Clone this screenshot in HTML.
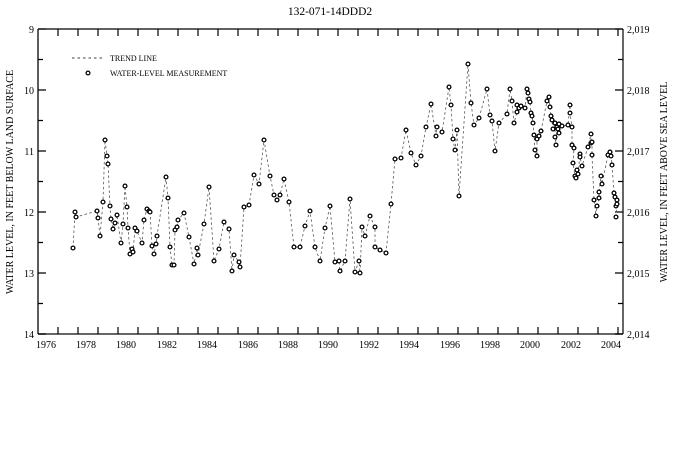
<!DOCTYPE html>
<html><head><meta charset="utf-8"><style>
html,body{margin:0;padding:0;background:#fff;}
svg{display:block;font-family:"Liberation Serif",serif;}
#pts circle{r:1.9px;}
</style></head><body>
<svg width="673" height="456" viewBox="0 0 673 456" xmlns="http://www.w3.org/2000/svg">
<text x="330" y="15" font-size="11.5" text-anchor="middle">132-071-14DDD2</text>
<g stroke="#000" fill="none">
<line x1="38" y1="29" x2="623" y2="29" stroke-width="1.2"/>
<line x1="38" y1="29" x2="38" y2="334" stroke-width="1.6" stroke="#333"/>
<line x1="38" y1="334" x2="623" y2="334" stroke-width="1.6" stroke="#333"/>
<line x1="623" y1="29" x2="623" y2="334" stroke-width="1.2"/>
<g stroke-width="1.2">
<path d="M38 29h8M38 90h8M38 151h8M38 212h8M38 273h8M38 334h8M38 59.5h5M38 120.5h5M38 181.5h5M38 242.5h5M38 303.5h5"/>
<path d="M623 29h-8M623 90h-8M623 151h-8M623 212h-8M623 273h-8M623 334h-8M623 59.5h-5M623 120.5h-5M623 181.5h-5M623 242.5h-5M623 303.5h-5"/>
<path d="M58 29v7M78 29v7M98 29v7M118 29v7M138 29v7M158 29v7M178 29v7M198 29v7M218 29v7M238 29v7M258 29v7M278 29v7M298 29v7M318 29v7M338 29v7M358 29v7M378 29v7M398 29v7M418 29v7M438 29v7M458 29v7M478 29v7M498 29v7M518 29v7M538 29v7M558 29v7M578 29v7M598 29v7M618 29v7"/>
<path d="M58 334v-7M78 334v-7M98 334v-7M118 334v-7M138 334v-7M158 334v-7M178 334v-7M198 334v-7M218 334v-7M238 334v-7M258 334v-7M278 334v-7M298 334v-7M318 334v-7M338 334v-7M358 334v-7M378 334v-7M398 334v-7M418 334v-7M438 334v-7M458 334v-7M478 334v-7M498 334v-7M518 334v-7M538 334v-7M558 334v-7M578 334v-7M598 334v-7M618 334v-7"/>
</g>
</g>
<g font-size="10">
<g text-anchor="end"><text x="34" y="33">9</text><text x="34" y="94">10</text><text x="34" y="155">11</text><text x="34" y="216">12</text><text x="34" y="277">13</text><text x="34" y="338">14</text></g>
<g><text x="627" y="33">2,019</text><text x="627" y="94">2,018</text><text x="627" y="155">2,017</text><text x="627" y="216">2,016</text><text x="627" y="277">2,015</text><text x="627" y="338">2,014</text></g>
<g text-anchor="middle"><text x="46" y="348">1976</text><text x="86" y="348">1978</text><text x="126" y="348">1980</text><text x="167" y="348">1982</text><text x="207" y="348">1984</text><text x="248" y="348">1986</text><text x="288" y="348">1988</text><text x="328" y="348">1990</text><text x="369" y="348">1992</text><text x="409" y="348">1994</text><text x="450" y="348">1996</text><text x="490" y="348">1998</text><text x="530" y="348">2000</text><text x="571" y="348">2002</text><text x="611" y="348">2004</text></g>
<text transform="translate(13,182) rotate(-90)" text-anchor="middle">WATER LEVEL, IN FEET BELOW LAND SURFACE</text>
<text transform="translate(667,182) rotate(-90)" text-anchor="middle">WATER LEVEL, IN FEET ABOVE SEA LEVEL</text>
</g>
<line x1="72" y1="58" x2="105" y2="58" stroke="#000" stroke-width="0.8" stroke-dasharray="2.5,3"/>
<text x="110" y="61" font-size="8">TREND LINE</text>
<circle cx="88" cy="73" r="1.9" fill="none" stroke="#000" stroke-width="1.3"/>
<text x="110" y="76" font-size="8">WATER-LEVEL MEASUREMENT</text>
<polyline fill="none" stroke="#555" stroke-width="0.8" stroke-dasharray="2.5,2.5" points="73,248 75,212 76,217 97,211 98,218 100,236 103,202 105,140 107,156 108,164 110,206 111,219 113,229 115,223 117,215 121,243 123,224 125,186 127,207 128,228 130,254 132,249 133,252 135,228 137,231 142,243 144,220 147,209 149,211 150,212 152,246 154,254 156,244 157,236 166,177 168,198 170,247 172,265 174,265 175,230 177,227 178,220 184,213 189,237 194,264 197,248 198,255 204,224 209,187 214,261 219,249 224,222 229,229 232,271 234,255 239,262 240,267 244,207 249,205 254,175 259,184 264,140 270,176 274,195 277,200 280,195 284,179 289,202 294,247 300,247 305,226 310,211 315,247 320,261 325,228 330,206 335,262 339,261 340,271 345,261 350,199 355,272 359,261 360,273 362,227 365,236 370,216 375,227 375,247 380,250 386,253 391,204 395,159 401,158 406,130 411,153 416,165 421,156 426,127 431,104 436,136 437,127 442,132 449,87 451,105 453,139 455,150 457,130 459,196 468,64 471,103 474,125 479,118 487,89 490,115 492,121 495,151 499,123 507,114 510,89 512,101 514,123 517,112 517,105 519,108 521,106 525,108 527,89 528,93 529,99 530,102 531,113 532,116 533,123 534,135 535,150 537,156 537,139 539,136 541,131 547,101 549,97 550,107 551,116 552,120 553,129 555,123 555,137 556,145 557,127 558,129 559,124 559,133 562,126 568,125 570,105 570,113 572,127 572,145 574,148 573,163 575,176 576,178 577,170 578,174 580,154 580,157 582,166 588,147 591,134 591,143 592,142 592,155 594,200 596,216 597,206 599,198 599,192 601,176 602,184 608,155 610,152 611,156 612,165 614,193 615,197 617,200 616,206 617,204 616,217"/>
<g id="pts" fill="#fff" stroke="#000" stroke-width="1.3">
<circle cx="73" cy="248"/><circle cx="75" cy="212"/><circle cx="76" cy="217"/><circle cx="97" cy="211"/><circle cx="98" cy="218"/><circle cx="100" cy="236"/><circle cx="103" cy="202"/><circle cx="105" cy="140"/><circle cx="107" cy="156"/><circle cx="108" cy="164"/><circle cx="110" cy="206"/><circle cx="111" cy="219"/><circle cx="113" cy="229"/><circle cx="115" cy="223"/><circle cx="117" cy="215"/><circle cx="121" cy="243"/><circle cx="123" cy="224"/><circle cx="125" cy="186"/><circle cx="127" cy="207"/><circle cx="128" cy="228"/><circle cx="130" cy="254"/><circle cx="132" cy="249"/><circle cx="133" cy="252"/><circle cx="135" cy="228"/><circle cx="137" cy="231"/><circle cx="142" cy="243"/><circle cx="144" cy="220"/><circle cx="147" cy="209"/><circle cx="149" cy="211"/><circle cx="150" cy="212"/><circle cx="152" cy="246"/><circle cx="154" cy="254"/><circle cx="156" cy="244"/><circle cx="157" cy="236"/><circle cx="166" cy="177"/><circle cx="168" cy="198"/><circle cx="170" cy="247"/><circle cx="172" cy="265"/><circle cx="174" cy="265"/><circle cx="175" cy="230"/><circle cx="177" cy="227"/><circle cx="178" cy="220"/><circle cx="184" cy="213"/><circle cx="189" cy="237"/><circle cx="194" cy="264"/><circle cx="197" cy="248"/><circle cx="198" cy="255"/><circle cx="204" cy="224"/><circle cx="209" cy="187"/><circle cx="214" cy="261"/><circle cx="219" cy="249"/><circle cx="224" cy="222"/><circle cx="229" cy="229"/><circle cx="232" cy="271"/><circle cx="234" cy="255"/><circle cx="239" cy="262"/><circle cx="240" cy="267"/><circle cx="244" cy="207"/><circle cx="249" cy="205"/><circle cx="254" cy="175"/><circle cx="259" cy="184"/><circle cx="264" cy="140"/><circle cx="270" cy="176"/><circle cx="274" cy="195"/><circle cx="277" cy="200"/><circle cx="280" cy="195"/><circle cx="284" cy="179"/><circle cx="289" cy="202"/><circle cx="294" cy="247"/><circle cx="300" cy="247"/><circle cx="305" cy="226"/><circle cx="310" cy="211"/><circle cx="315" cy="247"/><circle cx="320" cy="261"/><circle cx="325" cy="228"/><circle cx="330" cy="206"/><circle cx="335" cy="262"/><circle cx="339" cy="261"/><circle cx="340" cy="271"/><circle cx="345" cy="261"/><circle cx="350" cy="199"/><circle cx="355" cy="272"/><circle cx="359" cy="261"/><circle cx="360" cy="273"/><circle cx="362" cy="227"/><circle cx="365" cy="236"/><circle cx="370" cy="216"/><circle cx="375" cy="227"/><circle cx="375" cy="247"/><circle cx="380" cy="250"/><circle cx="386" cy="253"/><circle cx="391" cy="204"/><circle cx="395" cy="159"/><circle cx="401" cy="158"/><circle cx="406" cy="130"/><circle cx="411" cy="153"/><circle cx="416" cy="165"/><circle cx="421" cy="156"/><circle cx="426" cy="127"/><circle cx="431" cy="104"/><circle cx="436" cy="136"/><circle cx="437" cy="127"/><circle cx="442" cy="132"/><circle cx="449" cy="87"/><circle cx="451" cy="105"/><circle cx="453" cy="139"/><circle cx="455" cy="150"/><circle cx="457" cy="130"/><circle cx="459" cy="196"/><circle cx="468" cy="64"/><circle cx="471" cy="103"/><circle cx="474" cy="125"/><circle cx="479" cy="118"/><circle cx="487" cy="89"/><circle cx="490" cy="115"/><circle cx="492" cy="121"/><circle cx="495" cy="151"/><circle cx="499" cy="123"/><circle cx="507" cy="114"/><circle cx="510" cy="89"/><circle cx="512" cy="101"/><circle cx="514" cy="123"/><circle cx="517" cy="112"/><circle cx="517" cy="105"/><circle cx="519" cy="108"/><circle cx="521" cy="106"/><circle cx="525" cy="108"/><circle cx="527" cy="89"/><circle cx="528" cy="93"/><circle cx="529" cy="99"/><circle cx="530" cy="102"/><circle cx="531" cy="113"/><circle cx="532" cy="116"/><circle cx="533" cy="123"/><circle cx="534" cy="135"/><circle cx="535" cy="150"/><circle cx="537" cy="156"/><circle cx="537" cy="139"/><circle cx="539" cy="136"/><circle cx="541" cy="131"/><circle cx="547" cy="101"/><circle cx="549" cy="97"/><circle cx="550" cy="107"/><circle cx="551" cy="116"/><circle cx="552" cy="120"/><circle cx="553" cy="129"/><circle cx="555" cy="123"/><circle cx="555" cy="137"/><circle cx="556" cy="145"/><circle cx="557" cy="127"/><circle cx="558" cy="129"/><circle cx="559" cy="124"/><circle cx="559" cy="133"/><circle cx="562" cy="126"/><circle cx="568" cy="125"/><circle cx="570" cy="105"/><circle cx="570" cy="113"/><circle cx="572" cy="127"/><circle cx="572" cy="145"/><circle cx="574" cy="148"/><circle cx="573" cy="163"/><circle cx="575" cy="176"/><circle cx="576" cy="178"/><circle cx="577" cy="170"/><circle cx="578" cy="174"/><circle cx="580" cy="154"/><circle cx="580" cy="157"/><circle cx="582" cy="166"/><circle cx="588" cy="147"/><circle cx="591" cy="134"/><circle cx="591" cy="143"/><circle cx="592" cy="142"/><circle cx="592" cy="155"/><circle cx="594" cy="200"/><circle cx="596" cy="216"/><circle cx="597" cy="206"/><circle cx="599" cy="198"/><circle cx="599" cy="192"/><circle cx="601" cy="176"/><circle cx="602" cy="184"/><circle cx="608" cy="155"/><circle cx="610" cy="152"/><circle cx="611" cy="156"/><circle cx="612" cy="165"/><circle cx="614" cy="193"/><circle cx="615" cy="197"/><circle cx="617" cy="200"/><circle cx="616" cy="206"/><circle cx="617" cy="204"/><circle cx="616" cy="217"/>
</g>
</svg>
</body></html>
